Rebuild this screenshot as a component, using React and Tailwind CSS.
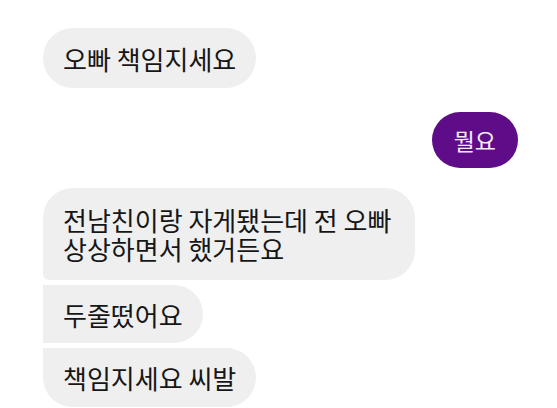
import React from 'react';

const grey = 'bg-[#efefef] text-[#161616] text-[26px] leading-[29px] px-5';

function App() {
  return (
    <div
      className="flex h-[408px] w-[557px] flex-col overflow-hidden bg-white pl-[43px] pr-[39px] pt-[28px]"
      style={{ fontFamily: '"Noto Sans CJK KR", "Noto Sans", sans-serif' }}
    >
      <div className={`${grey} flex h-[60px] items-center self-start rounded-full`}>
        오빠 책임지세요
      </div>

      <div className="mt-[24px] flex h-[56px] items-center self-end rounded-full bg-[#5f0c88] px-[22px] text-[23px] text-[#f5ecf8]">
        뭘요
      </div>

      <div className={`${grey} mt-[20px] self-start rounded-[30px] rounded-bl-[6px] py-[17px] pr-[24px]`}>
        <div>전남친이랑 자게됐는데 전 오빠</div>
        <div>상상하면서 했거든요</div>
      </div>

      <div className={`${grey} mt-[5px] flex h-[58px] items-center self-start rounded-l-[6px] rounded-r-full`}>
        두줄떴어요
      </div>

      <div className={`${grey} mt-[5px] flex h-[59px] items-center self-start rounded-full rounded-tl-[6px]`}>
        책임지세요 씨발
      </div>
    </div>
  );
}

export default App;
